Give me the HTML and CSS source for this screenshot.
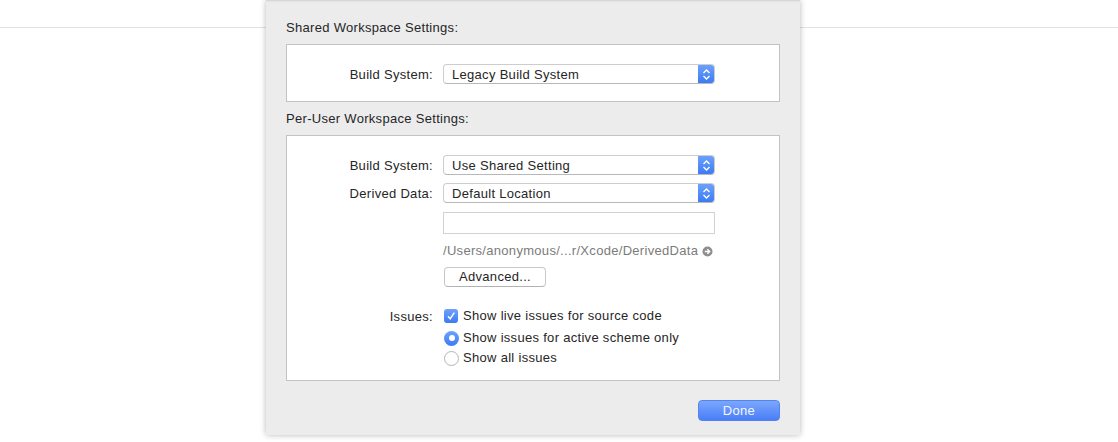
FILE: index.html
```html
<!DOCTYPE html>
<html>
<head>
<meta charset="utf-8">
<link rel="stylesheet" href="styles.css">
</head>
<body>
<div class="window">
  <div class="toolbar-line"></div>
  <div class="sheet">
    <div class="section-title">Shared Workspace Settings:</div>
    <div class="group group-shared">
      <div class="form">
        <div class="label">Build System:</div>
        <div class="popup">
          <span class="popup-text">Legacy Build System</span>
          <span class="stepper"><svg width="9" height="13" viewBox="0 0 9 13"><path d="M1.5 5 L4.5 2 L7.5 5 M1.5 8 L4.5 11 L7.5 8" fill="none" stroke="#fff" stroke-width="1.4"/></svg></span>
        </div>
      </div>
    </div>
    <div class="section-title">Per-User Workspace Settings:</div>
    <div class="group group-user">
      <div class="form">
        <div class="label">Build System:</div>
        <div class="popup">
          <span class="popup-text">Use Shared Setting</span>
          <span class="stepper"><svg width="9" height="13" viewBox="0 0 9 13"><path d="M1.5 5 L4.5 2 L7.5 5 M1.5 8 L4.5 11 L7.5 8" fill="none" stroke="#fff" stroke-width="1.4"/></svg></span>
        </div>
        <div class="label">Derived Data:</div>
        <div class="popup">
          <span class="popup-text">Default Location</span>
          <span class="stepper"><svg width="9" height="13" viewBox="0 0 9 13"><path d="M1.5 5 L4.5 2 L7.5 5 M1.5 8 L4.5 11 L7.5 8" fill="none" stroke="#fff" stroke-width="1.4"/></svg></span>
        </div>
        <div class="label"></div>
        <div class="textfield"></div>
        <div class="label"></div>
        <div class="path">/Users/anonymous/...r/Xcode/DerivedData <svg class="go" width="11" height="11" viewBox="0 0 11 11"><circle cx="5.5" cy="5.5" r="5" fill="#8e8e8e"/><path d="M2.8 5.5 H7.6 M5.4 3.3 L7.6 5.5 L5.4 7.7" fill="none" stroke="#fff" stroke-width="1.5"/></svg></div>
        <div class="label"></div>
        <div class="button-row"><div class="push">Advanced...</div></div>
        <div class="label label-issues">Issues:</div>
        <div class="options">
          <div class="option">
            <span class="checkbox"><svg width="10" height="10" viewBox="0 0 10 10"><path d="M2 5.3 L4.2 7.8 L8.3 1.6" fill="none" stroke="#fff" stroke-width="1.5"/></svg></span>
            <span>Show live issues for source code</span>
          </div>
          <div class="option option-radio">
            <span class="radio radio-on"><span class="dot"></span></span>
            <span>Show issues for active scheme only</span>
          </div>
          <div class="option option-radio">
            <span class="radio"></span>
            <span>Show all issues</span>
          </div>
        </div>
      </div>
    </div>
    <div class="footer">
      <div class="done">Done</div>
    </div>
  </div>
</div>
</body>
</html>
```

FILE: styles.css
```css
html, body {
  margin: 0;
  padding: 0;
  background: #ffffff;
}
body {
  font-family: "Liberation Sans", Arial, sans-serif;
  font-size: 13px;
  letter-spacing: 0.3px;
  color: #262626;
}
.window {
  position: relative;
  width: 1118px;
  height: 442px;
  overflow: hidden;
}
.toolbar-line {
  height: 27px;
  border-bottom: 1px solid #e2e2e2;
}
.sheet {
  position: absolute;
  left: 266px;
  top: 0;
  width: 534px;
  height: 435px;
  box-sizing: border-box;
  padding: 20px 20px 0 20px;
  background: #ececec;
  box-shadow: 0 0 6px rgba(0,0,0,0.28), inset 0 2px 2px -1px rgba(0,0,0,0.12);
  display: flex;
  flex-direction: column;
}
.section-title {
  line-height: 16px;
  height: 16px;
}
.group {
  margin-top: 8px;
  background: #ffffff;
  border: 1px solid #c3c3c3;
}
.group-shared {
  padding-top: 19px;
  box-sizing: content-box;
  height: 37px;
  margin-bottom: 9px;
}
.group-user {
  padding-top: 19px;
  height: 225px;
  margin-bottom: 0;
}
.form {
  display: grid;
  grid-template-columns: 146px 272px;
  column-gap: 10px;
  row-gap: 8px;
  align-items: center;
}
.label {
  text-align: right;
  line-height: 16px;
  padding-top: 1px;
}
.popup {
  position: relative;
  height: 20px;
  box-sizing: border-box;
  border: 1px solid #cdcdcd;
  border-bottom-color: #b8b8b8;
  border-radius: 4px;
  background: #ffffff;
  display: flex;
  align-items: center;
  overflow: hidden;
}
.popup-text {
  flex: 1;
  padding-left: 8px;
  line-height: 16px;
  padding-top: 1px;
}
.stepper {
  width: 17px;
  height: 20px;
  margin-top: -1px;
  margin-bottom: -1px;
  margin-right: -1px;
  background: linear-gradient(#6ea3fb, #3b78f5);
  display: flex;
  align-items: center;
  justify-content: center;
  border-radius: 0 4px 4px 0;
}
.textfield {
  height: 22px;
  box-sizing: border-box;
  border: 1px solid #d2d2d2;
  background: #fff;
  margin-top: 1px;
}
.path {
  color: #7b7b7b;
  line-height: 16px;
  display: flex;
  align-items: center;
  gap: 4px;
  white-space: nowrap;
  margin-top: 1px;
  letter-spacing: 0.3px;
}
.go {
  margin-top: 1px;
}
.button-row {
  display: flex;
}
.push {
  width: 102px;
  height: 20px;
  box-sizing: border-box;
  border: 1px solid #c8c8c8;
  border-bottom-color: #b3b3b3;
  border-radius: 4px;
  background: #ffffff;
  text-align: center;
  line-height: 18px;
  margin-left: 1px;
}
.label-issues {
  align-self: start;
  margin-top: 13px;
}
.options {
  display: flex;
  flex-direction: column;
  margin-top: 11px;
}
.option {
  display: flex;
  align-items: center;
  gap: 5px;
  height: 20px;
  line-height: 16px;
}
.option-radio {
  margin-top: 2px;
  height: 20px;
  gap: 4px;
}
.option-radio + .option-radio {
  margin-top: 0;
}
.checkbox {
  width: 14px;
  height: 14px;
  margin-left: 1px;
  box-sizing: border-box;
  border-radius: 3px;
  background: linear-gradient(#6ea3fb, #3d7af5);
  display: flex;
  align-items: center;
  justify-content: center;
}
.radio {
  width: 15px;
  height: 15px;
  margin-left: 1px;
  box-sizing: border-box;
  border-radius: 50%;
  border: 1px solid #b5b5b5;
  background: #ffffff;
  display: flex;
  align-items: center;
  justify-content: center;
}
.radio-on {
  border: none;
  background: linear-gradient(#6ea3fb, #3d7af5);
}
.dot {
  width: 6px;
  height: 6px;
  border-radius: 50%;
  background: #ffffff;
}
.footer {
  display: flex;
  justify-content: flex-end;
  margin-top: 19px;
}
.done {
  width: 82px;
  height: 21px;
  box-sizing: border-box;
  border-radius: 4px;
  background: linear-gradient(#7aa7fd, #4a7ef8);
  border: 1px solid #5483f2;
  color: #f4f7ff;
  text-align: center;
  line-height: 19px;
}
```
